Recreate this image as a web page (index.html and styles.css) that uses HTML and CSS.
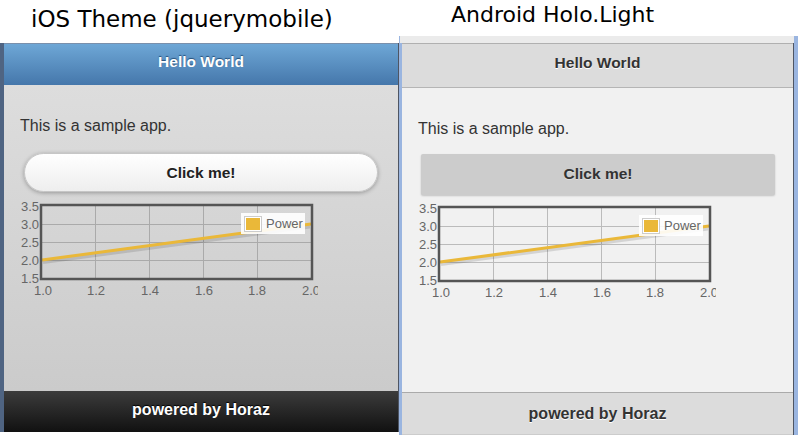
FILE: index.html
```html
<!DOCTYPE html>
<html>
<head>
<meta charset="utf-8">
<link rel="stylesheet" href="styles.css">
</head>
<body>
<div class="page">
  <div class="col col-ios">
    <div class="title title-ios">iOS Theme (jquerymobile)</div>
    <div class="panel ios">
      <div class="hdr">Hello World</div>
      <div class="content">
        <p class="text">This is a sample app.</p>
        <div class="btn">Click me!</div>
        <svg class="chart" width="302" height="100" viewBox="0 0 302 100">
          <g stroke="#aaa" stroke-width="1" fill="none">
            <line x1="79.5" y1="8" x2="79.5" y2="80"/>
            <line x1="133.5" y1="8" x2="133.5" y2="80"/>
            <line x1="187.5" y1="8" x2="187.5" y2="80"/>
            <line x1="241.5" y1="8" x2="241.5" y2="80"/>
            <line x1="26" y1="26.5" x2="295" y2="26.5"/>
            <line x1="26" y1="44.5" x2="295" y2="44.5"/>
            <line x1="26" y1="62.5" x2="295" y2="62.5"/>
          </g>
          <line x1="27" y1="64" x2="294" y2="28.5" stroke="#000" stroke-opacity="0.12" stroke-width="4"/>
          <line x1="26" y1="62" x2="295" y2="26" stroke="#eab839" stroke-width="3"/>
          <rect x="25" y="7" width="271" height="74" fill="none" stroke="#555" stroke-width="2.5"/>
          <g class="lbl" text-anchor="end">
            <text x="23" y="12.5">3.5</text>
            <text x="23" y="30.5">3.0</text>
            <text x="23" y="48.5">2.5</text>
            <text x="23" y="66.5">2.0</text>
            <text x="23" y="84.5">1.5</text>
          </g>
          <g class="lbl" text-anchor="middle">
            <text x="27" y="97">1.0</text>
            <text x="80" y="97">1.2</text>
            <text x="134" y="97">1.4</text>
            <text x="188" y="97">1.6</text>
            <text x="241" y="97">1.8</text>
            <text x="295" y="97">2.0</text>
          </g>
          <rect x="225" y="15" width="64" height="21" fill="#fff" fill-opacity="0.9"/>
          <rect x="228.5" y="18.5" width="17" height="15" fill="#fff" stroke="#ccc"/>
          <rect x="230" y="20" width="14" height="12" fill="#eab839"/>
          <text class="lbl" x="250" y="29.5">Power</text>
        </svg>
      </div>
      <div class="ftr">powered by Horaz</div>
    </div>
  </div>
  <div class="col col-android">
    <div class="title title-android">Android Holo.Light</div>
    <div class="panel android">
      <div class="strip"></div>
      <div class="hdr">Hello World</div>
      <div class="content">
        <p class="text">This is a sample app.</p>
        <div class="btn">Click me!</div>
        <svg class="chart" width="302" height="100" viewBox="0 0 302 100">
          <g stroke="#bbb" stroke-width="1" fill="none">
            <line x1="79.5" y1="8" x2="79.5" y2="80"/>
            <line x1="133.5" y1="8" x2="133.5" y2="80"/>
            <line x1="187.5" y1="8" x2="187.5" y2="80"/>
            <line x1="241.5" y1="8" x2="241.5" y2="80"/>
            <line x1="26" y1="26.5" x2="295" y2="26.5"/>
            <line x1="26" y1="44.5" x2="295" y2="44.5"/>
            <line x1="26" y1="62.5" x2="295" y2="62.5"/>
          </g>
          <line x1="27" y1="64" x2="294" y2="28.5" stroke="#000" stroke-opacity="0.12" stroke-width="4"/>
          <line x1="26" y1="62" x2="295" y2="26" stroke="#eab839" stroke-width="3"/>
          <rect x="25" y="7" width="271" height="74" fill="none" stroke="#555" stroke-width="2.5"/>
          <g class="lbl" text-anchor="end">
            <text x="23" y="12.5">3.5</text>
            <text x="23" y="30.5">3.0</text>
            <text x="23" y="48.5">2.5</text>
            <text x="23" y="66.5">2.0</text>
            <text x="23" y="84.5">1.5</text>
          </g>
          <g class="lbl" text-anchor="middle">
            <text x="27" y="97">1.0</text>
            <text x="80" y="97">1.2</text>
            <text x="134" y="97">1.4</text>
            <text x="188" y="97">1.6</text>
            <text x="241" y="97">1.8</text>
            <text x="295" y="97">2.0</text>
          </g>
          <rect x="225" y="15" width="64" height="21" fill="#fff" fill-opacity="0.9"/>
          <rect x="228.5" y="18.5" width="17" height="15" fill="#fff" stroke="#ccc"/>
          <rect x="230" y="20" width="14" height="12" fill="#eab839"/>
          <text class="lbl" x="250" y="29.5">Power</text>
        </svg>
      </div>
      <div class="ftr">powered by Horaz</div>
    </div>
  </div>
</div>
</body>
</html>
```
FILE: styles.css
```css
* { box-sizing: border-box; }
html, body { margin: 0; padding: 0; background: #fff; }
body { font-family: "Liberation Sans", Arial, sans-serif; width: 798px; height: 438px; overflow: hidden; }
.page { display: flex; }
.col { width: 399px; display: flex; flex-direction: column; }

.title { font-family: "DejaVu Sans", sans-serif; color: #000; white-space: nowrap; }
.title-ios { height: 43px; font-size: 23px; line-height: 38px; padding-left: 31px; }
.title-android { height: 36px; font-size: 22px; line-height: 30px; padding-left: 52px; }

.panel { display: flex; flex-direction: column; }
.hdr, .ftr { display: flex; align-items: center; justify-content: center; font-weight: bold; }
.hdr { font-size: 15.5px; padding-bottom: 5px; }
.ftr { font-size: 16px; padding-bottom: 3px; }
.content { position: relative; }
.text { margin: 0; font-size: 16px; color: #333; }
.btn { display: flex; align-items: center; justify-content: center; font-weight: bold; font-size: 15.5px; }
.chart { display: block; margin-left: -4px; }
.lbl { font-family: "Liberation Sans", Arial, sans-serif; font-size: 13px; fill: #666; }

/* iOS */
.ios { border-left: 4px solid #4f6482; border-right: 1px solid #4e5563; height: 389px; }
.ios .hdr { height: 42px; color: #fff; text-shadow: 0 -1px 1px #254f7a; background: linear-gradient(#6ea7d6, #4577ab); border-top: 1px solid #7a90ac; }
.ios .content { height: 306px; background: linear-gradient(#dddddd, #cbcbcb); padding: 31px 0 0 16px; }
.ios .text { height: 37px; line-height: 20px; }
.ios .btn { width: 354px; height: 39px; margin-left: 4px; border-radius: 20px; background: linear-gradient(#ffffff, #eeeeee); border: 1px solid #c6c6c6; box-shadow: 0 1px 4px rgba(0,0,0,.3); color: #222; text-shadow: 0 1px 0 #fff; margin-bottom: 6px; }
.ios .ftr { height: 41px; color: #fff; text-shadow: 0 -1px 1px #000; background: linear-gradient(#3c3c3c, #111111); }

/* Android */
.android { border-left: 3px solid #9ab5e0; border-right: 4px solid #9ab5e0; box-shadow: inset -1px 0 0 #4e5563; height: 399px; }
.android .strip { height: 7px; background: #ebebeb; margin-left: -2px; }
.android .hdr { height: 45px; background: #dcdcdc; color: #333; text-shadow: 0 1px 0 #fff; border-top: 1px solid #b0b0b0; border-bottom: 1px solid #b5b5b5; margin-right: 1px; }
.android .content { height: 305px; background: #f1f1f1; padding: 31px 0 0 16px; margin-right: 1px; }
.android .text { height: 35px; line-height: 20px; }
.android .btn { width: 354px; height: 41px; margin-left: 3px; border-radius: 2px; background: #cccccc; box-shadow: 0 1px 2px rgba(0,0,0,.2); color: #333; text-shadow: 0 1px 0 #ddd; margin-bottom: 5px; }
.android .ftr { height: 43px; padding-bottom: 0; background: #dcdcdc; color: #333; text-shadow: 0 1px 0 #fff; border-top: 1px solid #aaa; border-bottom: 1px solid #ccc; margin-right: 1px; }
```
